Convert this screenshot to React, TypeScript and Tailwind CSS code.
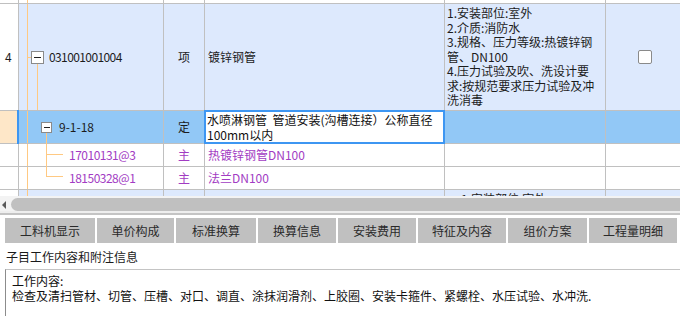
import React from "react";

const c0 = "w-[19px] shrink-0 border-r border-[#c0c0c0] relative";
const c1 = "w-[145px] shrink-0 border-r border-[#c0c0c0] relative flex items-center";
const c2 = "w-[41px] shrink-0 border-r border-[#c0c0c0] flex items-center justify-center";
const c3 = "w-[240px] shrink-0 border-r border-[#c0c0c0] relative flex items-center pl-[3px]";
const c4 = "w-[161px] shrink-0 border-r border-[#c0c0c0] relative";
const c5 = "flex-1 relative flex items-center justify-center";

const descLines = [
  "1.安装部位:室外",
  "2.介质:消防水",
  "3.规格、压力等级:热镀锌钢",
  "管、DN100",
  "4.压力试验及吹、洗设计要",
  "求:按规范要求压力试验及冲",
  "洗消毒",
];

function MinusBox({ size }: { size: "lg" | "sm" }) {
  return (
    <div
      className={
        size === "lg"
          ? "relative z-10 w-[13px] h-[13px] shrink-0 border border-[#8a8a8a] bg-white flex items-center justify-center"
          : "relative z-10 w-[11px] h-[11px] shrink-0 border border-[#8a8a8a] bg-white flex items-center justify-center"
      }
    >
      <div className={size === "lg" ? "w-[7px] h-px bg-[#222]" : "w-[6px] h-px bg-[#222]"} />
    </div>
  );
}

const tabs: { label: string; w: string }[] = [
  { label: "工料机显示", w: "w-[90px]" },
  { label: "单价构成", w: "w-[77px]" },
  { label: "标准换算", w: "w-[80px]" },
  { label: "换算信息", w: "w-[78px]" },
  { label: "安装费用", w: "w-[78px]" },
  { label: "特征及内容", w: "w-[88px]" },
  { label: "组价方案", w: "w-[79px]" },
  { label: "工程量明细", w: "w-[88px]" },
];

export default function App() {
  return (
    <div className="w-[680px] h-[316px] overflow-hidden bg-white text-[12px] text-[#1c1c1c] font-['Noto_Sans_CJK_SC',sans-serif] flex flex-col">
      {/* grid */}
      <div className="h-[196px] shrink-0 overflow-hidden">
        {/* top strip */}
        <div className="flex h-[4px] border-b border-[#c0c0c0] bg-white">
          <div className={c0} />
          <div className={c1}>
            <div className="absolute left-[8px] top-0 bottom-0 w-px bg-[#ffc982]" />
          </div>
          <div className={c2} />
          <div className={c3} />
          <div className={c4} />
          <div className={c5} />
        </div>

        {/* row 1 */}
        <div className="flex h-[107px] border-b border-[#c0c0c0] bg-[#dde9fd]">
          <div className={c0 + " bg-white flex items-center pl-[5px]"}>4</div>
          <div className={c1 + " pl-[12px]"}>
            <div className="absolute left-[8px] top-0 bottom-0 w-px bg-[#ffc982]" />
            <div className="absolute left-[8px] top-[53px] w-[4px] h-px bg-[#ffc982]" />
            <div className="absolute left-[18px] top-[59px] bottom-0 w-px bg-[#ffc982]" />
            <MinusBox size="lg" />
            <span className="ml-[5px] tracking-[-0.6px]">031001001004</span>
          </div>
          <div className={c2}>项</div>
          <div className={c3}>镀锌钢管</div>
          <div className={c4 + " flex flex-col justify-center pl-[2px] leading-[14.5px]"}>
            {descLines.map((l) => (
              <div key={l} className="whitespace-nowrap">
                {l}
              </div>
            ))}
          </div>
          <div className={c5}>
            <div className="w-[14px] h-[14px] border border-[#8a8a8a] rounded-[2px] bg-white ml-[4px]" />
          </div>
        </div>

        {/* row 2 selected */}
        <div className="flex h-[33px] border-b border-[#c0c0c0] bg-[#92c8f6]">
          <div className={c0 + " bg-[#fee7c8]"}>
            <div className="absolute -right-px -top-px -bottom-[1px] w-[2px] bg-[#3d96f2]" />
          </div>
          <div className={c1 + " pl-[22px]"}>
            <div className="absolute left-[8px] top-0 bottom-0 w-px bg-[#ffc982]" />
            <div className="absolute left-[27px] top-[21px] -bottom-px w-px bg-[#ffc982]" />
            <MinusBox size="sm" />
            <span className="ml-[7px]">9-1-18</span>
          </div>
          <div className={c2}>定</div>
          <div className={c3}>
            <div className="absolute -left-px -top-px w-[241px] h-[34px] z-10 border-2 border-[#3d96f2] bg-white pl-[1px] leading-[15px] text-[#111]">
              <div className="whitespace-pre">水喷淋钢管  管道安装(沟槽连接）公称直径</div>
              <div className="whitespace-pre">100mm以内</div>
            </div>
          </div>
          <div className={c4} />
          <div className={c5} />
        </div>

        {/* row 3 */}
        <div className="flex h-[23px] border-b border-[#c0c0c0] bg-white text-[#a23cc3]">
          <div className={c0} />
          <div className={c1 + " pl-[50px]"}>
            <div className="absolute left-[8px] top-0 bottom-0 w-px bg-[#ffc982]" />
            <div className="absolute left-[27px] top-0 -bottom-px w-px bg-[#ffc982]" />
            <div className="absolute left-[27px] top-[10px] w-[17px] h-px bg-[#ffc982]" />
            <span className="tracking-[-0.5px]">17010131@3</span>
          </div>
          <div className={c2}>主</div>
          <div className={c3}>热镀锌钢管DN100</div>
          <div className={c4} />
          <div className={c5} />
        </div>

        {/* row 4 */}
        <div className="flex h-[23px] border-b border-[#c0c0c0] bg-white text-[#a23cc3]">
          <div className={c0} />
          <div className={c1 + " pl-[50px]"}>
            <div className="absolute left-[8px] top-0 bottom-0 w-px bg-[#ffc982]" />
            <div className="absolute left-[27px] top-0 h-[10px] w-px bg-[#ffc982]" />
            <div className="absolute left-[27px] top-[9px] w-[17px] h-px bg-[#ffc982]" />
            <span className="tracking-[-0.5px]">18150328@1</span>
          </div>
          <div className={c2}>主</div>
          <div className={c3}>法兰DN100</div>
          <div className={c4} />
          <div className={c5} />
        </div>

        {/* row 5 partial */}
        <div className="flex h-[7px] overflow-hidden bg-[#dde9fd]">
          <div className={c0 + " bg-white"} />
          <div className={c1}>
            <div className="absolute left-[8px] top-0 bottom-0 w-px bg-[#ffc982]" />
          </div>
          <div className={c2} />
          <div className={c3} />
          <div className={c4 + " pl-[16px] pt-[2px] leading-[14.5px] whitespace-nowrap"}>1.安装部位:室外</div>
          <div className={c5} />
        </div>
      </div>

      {/* horizontal scrollbar */}
      <div className="h-[15px] shrink-0 bg-[#f3f3f3] pt-[2px] flex">
        <div className="w-[11px] shrink-0 flex items-center pl-[2px]">
          <div className="w-0 h-0 border-y-[4px] border-y-transparent border-r-[4px] border-r-[#5a5a5a]" />
        </div>
        <div className="flex-1 h-[13px] bg-[#c0c0c0] rounded-l-[7px]" />
      </div>
      <div className="h-[2px] shrink-0 bg-[#eeeeee]" />
      <div className="h-[2px] shrink-0 bg-[#c4c4c4]" />
      <div className="h-[3px] shrink-0 bg-white" />

      {/* tabs */}
      <div className="h-[25px] shrink-0 flex pl-[5px] gap-[2px]">
        {tabs.map((t) => (
          <div
            key={t.label}
            className={t.w + " shrink-0 h-full bg-[#c0c0c0] flex items-center justify-center text-[12px] text-[#2a2a2a]"}
          >
            {t.label}
          </div>
        ))}
      </div>

      {/* info */}
      <div className="h-[26px] shrink-0 pl-[6px] pt-[6px] leading-[16px] text-[#1a1a1a]">子目工作内容和附注信息</div>
      <div className="flex-1 ml-[5px] border-t border-l border-t-[#c4c4c4] border-l-[#8c8c8c] pl-[6px] pt-[3px] leading-[15px] text-[#111]">
        <div>工作内容:</div>
        <div className="whitespace-nowrap">
          检查及清扫管材、切管、压槽、对口、调直、涂抹润滑剂、上胶圈、安装卡箍件、紧螺栓、水压试验、水冲洗.
        </div>
      </div>
    </div>
  );
}
